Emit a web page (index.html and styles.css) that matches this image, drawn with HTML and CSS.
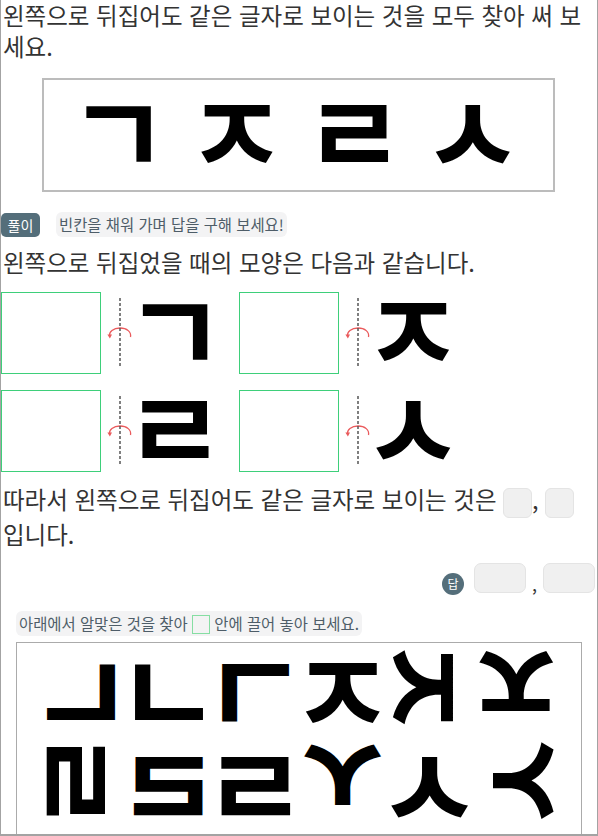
FILE: index.html
```html
<!DOCTYPE html>
<html lang="ko">
<head>
<meta charset="utf-8">
<title>뒤집기</title>
<link rel="stylesheet" href="styles.css">
</head>
<body>
<div class="page">
  <p class="q">왼쪽으로 뒤집어도 같은 글자로 보이는 것을 모두 찾아 써 보세요.</p>
  <div class="letters">
    <span class="cell"><span class="jamo">ㄱ</span></span>
    <span class="cell"><span class="jamo">ㅈ</span></span>
    <span class="cell"><span class="jamo">ㄹ</span></span>
    <span class="cell"><span class="jamo">ㅅ</span></span>
  </div>
  <div class="sol-head"><span class="badge">풀이</span><span class="hint">빈칸을 채워 가며 답을 구해 보세요!</span></div>
  <p class="q">왼쪽으로 뒤집었을 때의 모양은 다음과 같습니다.</p>
  <div class="flips">
    <div class="flip">
      <div class="drop"></div>
      <svg class="axis" width="26" height="72" viewBox="0 0 26 72"><path d="M23.5 40 C24.5 35 20 31 13 31 C6 31 2 35 2.6 38.5" fill="none" stroke="#ea5a5c" stroke-width="1.3"/><path d="M0.4 37.6 L2.9 41.6 L5 37.4 Z" fill="#ea5a5c"/><line x1="13" y1="1" x2="13" y2="71" stroke="#555" stroke-width="1.5" stroke-dasharray="3 2"/></svg>
      <span class="cell mid"><span class="jamo">ㄱ</span></span>
    </div>
    <div class="flip">
      <div class="drop"></div>
      <svg class="axis" width="26" height="72" viewBox="0 0 26 72"><path d="M23.5 40 C24.5 35 20 31 13 31 C6 31 2 35 2.6 38.5" fill="none" stroke="#ea5a5c" stroke-width="1.3"/><path d="M0.4 37.6 L2.9 41.6 L5 37.4 Z" fill="#ea5a5c"/><line x1="13" y1="1" x2="13" y2="71" stroke="#555" stroke-width="1.5" stroke-dasharray="3 2"/></svg>
      <span class="cell mid"><span class="jamo">ㅈ</span></span>
    </div>
    <div class="flip">
      <div class="drop"></div>
      <svg class="axis" width="26" height="72" viewBox="0 0 26 72"><path d="M23.5 40 C24.5 35 20 31 13 31 C6 31 2 35 2.6 38.5" fill="none" stroke="#ea5a5c" stroke-width="1.3"/><path d="M0.4 37.6 L2.9 41.6 L5 37.4 Z" fill="#ea5a5c"/><line x1="13" y1="1" x2="13" y2="71" stroke="#555" stroke-width="1.5" stroke-dasharray="3 2"/></svg>
      <span class="cell mid"><span class="jamo">ㄹ</span></span>
    </div>
    <div class="flip">
      <div class="drop"></div>
      <svg class="axis" width="26" height="72" viewBox="0 0 26 72"><path d="M23.5 40 C24.5 35 20 31 13 31 C6 31 2 35 2.6 38.5" fill="none" stroke="#ea5a5c" stroke-width="1.3"/><path d="M0.4 37.6 L2.9 41.6 L5 37.4 Z" fill="#ea5a5c"/><line x1="13" y1="1" x2="13" y2="71" stroke="#555" stroke-width="1.5" stroke-dasharray="3 2"/></svg>
      <span class="cell mid"><span class="jamo">ㅅ</span></span>
    </div>
  </div>
  <p class="q conclude">따라서 왼쪽으로 뒤집어도 같은 글자로 보이는 것은 <span class="blank"></span>, <span class="blank"></span> 입니다.</p>
  <div class="answer"><span class="dap">답</span><span class="ans-box"></span><span class="comma">,</span><span class="ans-box"></span></div>
  <div class="hint2">아래에서 알맞은 것을 찾아 <span class="slot"></span> 안에 끌어 놓아 보세요.</div>
  <div class="bank">
    <div class="bank-row">
      <span class="cell bk"><span class="jamo flip-x">ㄴ</span></span>
      <span class="cell bk"><span class="jamo">ㄴ</span></span>
      <span class="cell bk"><span class="jamo flip-x">ㄱ</span></span>
      <span class="cell bk"><span class="jamo">ㅈ</span></span>
      <span class="cell bk"><span class="jamo rot-90">ㅈ</span></span>
      <span class="cell bk"><span class="jamo rot-180">ㅈ</span></span>
    </div>
    <div class="bank-row">
      <span class="cell bk"><span class="jamo rot-90">ㄹ</span></span>
      <span class="cell bk"><span class="jamo flip-x">ㄹ</span></span>
      <span class="cell bk"><span class="jamo">ㄹ</span></span>
      <span class="cell bk"><span class="jamo flip-y">ㅅ</span></span>
      <span class="cell bk"><span class="jamo">ㅅ</span></span>
      <span class="cell bk"><span class="jamo rot-270">ㅅ</span></span>
    </div>
  </div>
</div>
</body>
</html>
```
FILE: styles.css
```css
html, body {
  margin: 0;
  padding: 0;
  background: #fff;
}
.page {
  box-sizing: border-box;
  width: 598px;
  height: 836px;
  border-left: 1px solid #a3a3a3;
  border-right: 1px solid #a3a3a3;
  border-bottom: 2px solid #a3a3a3;
  overflow: hidden;
  font-family: "Noto Sans CJK KR", "Noto Sans", sans-serif;
  color: #333;
}
.q {
  margin: 0;
  padding-left: 2px;
  font-size: 23.5px;
  line-height: 31px;
}
.letters {
  box-sizing: border-box;
  margin: 16px 0 0 41px;
  width: 513px;
  height: 114px;
  border: 2px solid #bcbcbc;
  padding-right: 6px;
  display: flex;
  justify-content: center;
  align-items: center;
}
.cell {
  display: flex;
  justify-content: center;
  align-items: center;
  width: 118px;
}
.jamo {
  display: inline-block;
  font-family: "Noto Sans CJK KR", sans-serif;
  font-weight: 700;
  font-size: 110px;
  line-height: 0.7;
  margin-bottom: 0.11em;
  color: #000;
}
.sol-head {
  margin-top: 20px;
  display: flex;
  align-items: center;
  gap: 16px;
}
.badge {
  display: inline-block;
  width: 39px;
  height: 24px;
  line-height: 24px;
  text-align: center;
  background: #546e7a;
  color: #fff;
  border-radius: 5px;
  font-size: 14px;
}
.hint {
  display: inline-block;
  height: 25px;
  line-height: 25px;
  padding: 0 3px;
  background: #f3f3f4;
  color: #4e5d68;
  border-radius: 6px;
  font-size: 15.4px;
}
.sol-head + .q {
  margin-top: 10px;
}
.flips {
  margin-top: 14px;
  display: grid;
  grid-template-columns: 209px 209px;
  column-gap: 29px;
  row-gap: 16px;
}
.flip {
  display: flex;
  align-items: center;
  height: 82px;
}
.drop {
  box-sizing: border-box;
  width: 100px;
  height: 82px;
  border: 1px solid #3ecf7a;
  flex: none;
}
.axis {
  flex: none;
  margin-left: 6px;
  display: block;
}
.cell.mid {
  width: 70px;
  margin-left: 7px;
}
.conclude {
  margin-top: 11px;
  line-height: 33px;
}
.blank {
  display: inline-block;
  box-sizing: border-box;
  width: 29px;
  height: 30px;
  vertical-align: middle;
  background: #f0f0f0;
  border: 1px solid #e4e4e4;
  border-radius: 6px;
}
.answer {
  margin-top: 10px;
  display: flex;
  justify-content: flex-end;
  align-items: center;
  padding-right: 2px;
}
.dap {
  display: inline-block;
  width: 22px;
  height: 22px;
  line-height: 22px;
  border-radius: 50%;
  background: #546e7a;
  color: #fff;
  font-size: 12px;
  text-align: center;
  margin-right: 10px;
  margin-top: 12px;
}
.ans-box {
  display: inline-block;
  box-sizing: border-box;
  width: 52px;
  height: 30px;
  background: #f0f0f0;
  border: 1px solid #e4e4e4;
  border-radius: 7px;
}
.comma {
  display: inline-block;
  width: 17px;
  text-align: center;
  font-size: 18px;
  line-height: 30px;
  align-self: flex-end;
  position: relative;
  top: 4px;
}
.hint2 {
  display: inline-block;
  margin: 16px 0 0 15px;
  height: 25px;
  line-height: 25px;
  padding: 0 3px;
  background: #f3f3f4;
  color: #4e5d68;
  border-radius: 6px;
  font-size: 15.4px;
}
.slot {
  display: inline-block;
  box-sizing: border-box;
  width: 18px;
  height: 19px;
  border: 1.5px solid #86dea3;
  vertical-align: -4px;
}
.bank {
  box-sizing: border-box;
  margin: 6px 0 0 15px;
  width: 566px;
  height: 260px;
  border: 1px solid #ababab;
  padding-top: 4px;
}
.bank-row {
  display: flex;
  justify-content: center;
  height: 94px;
  align-items: center;
}
.cell.bk {
  width: 87px;
}
.cell.bk .jamo {
  font-size: 114px;
}
.flip-x { transform: scaleX(-1); }
.flip-y { transform: scaleY(-1); }
.rot-90 { transform: rotate(90deg); }
.rot-180 { transform: rotate(180deg); }
.rot-270 { transform: rotate(-90deg); }
```
